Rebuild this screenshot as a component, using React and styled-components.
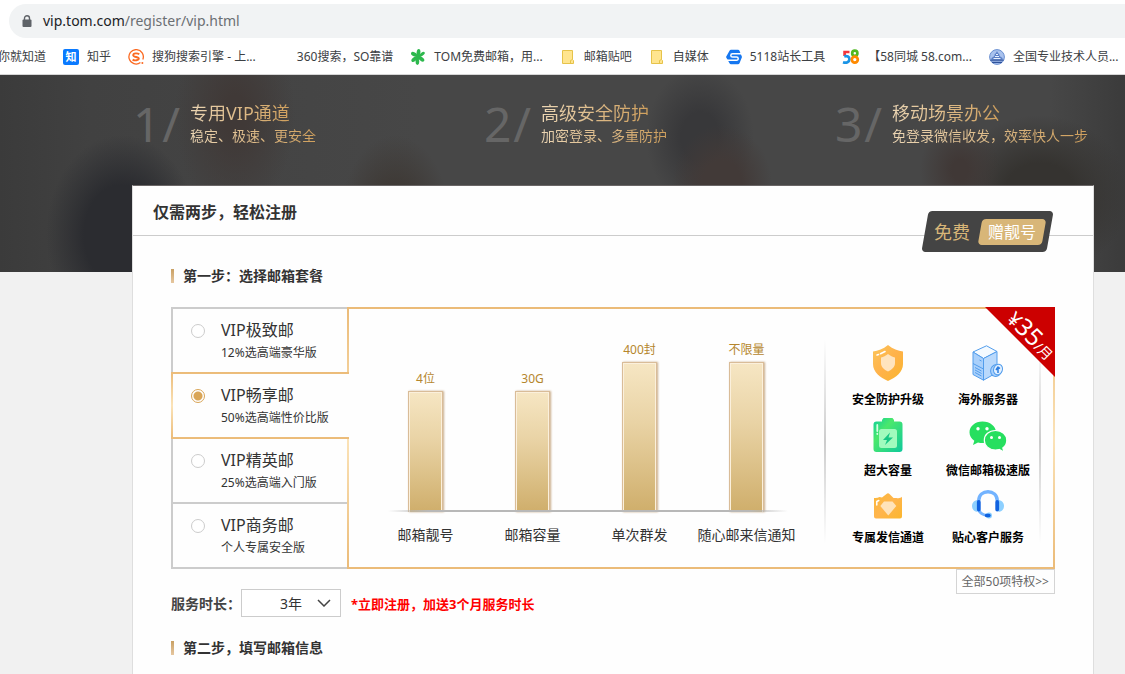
import React, { useState } from 'react';
import styled, { createGlobalStyle, css } from 'styled-components';

const GlobalStyle = createGlobalStyle`
  * {
    box-sizing: border-box;
  }
  html,
  body {
    margin: 0;
    padding: 0;
  }
  body {
    overflow: hidden;
    background: #f1f1f1;
    color: #333;
    font-family: 'Noto Sans', 'Noto Sans CJK SC', sans-serif;
    font-size: 14px;
  }
  h1, h2, h3, p, ul {
    margin: 0;
    padding: 0;
    font-weight: normal;
    list-style: none;
  }
  a {
    color: inherit;
    text-decoration: none;
  }
`;

const gold = '#ebbb78';

const Window = styled.div`
  display: flex;
  flex-direction: column;
  height: 100vh;
`;

const Browser = styled.header`
  flex: none;
  padding-top: 4px;
  background: #fff;
  border-bottom: 1px solid #d6d6d6;
`;

const AddressBar = styled.div`
  display: flex;
  align-items: center;
  gap: 11px;
  height: 34px;
  margin-left: 9px;
  padding-left: 13px;
  border-radius: 17px 0 0 17px;
  background: #f1f3f4;
`;

const Url = styled.div`
  color: #6b6f73;
  font-size: 14px;
  line-height: 20px;
  b {
    color: #202124;
    font-weight: normal;
  }
`;

const Bookmarks = styled.nav`
  display: flex;
  align-items: center;
  gap: 17px;
  height: 36px;
  margin-left: -2px;
  padding-top: 1px;
  overflow: hidden;
`;

const Bookmark = styled.a`
  display: flex;
  flex: none;
  align-items: center;
  gap: 8px;
  color: #3c4043;
  font-size: 12px;
  line-height: 16px;
  white-space: nowrap;
  svg {
    flex: none;
  }
`;

const Hero = styled.section`
  flex: none;
  height: 197px;
  padding: 26px 0 0 133px;
  background:
    radial-gradient(ellipse 76px 100px at 122px 160px, #2b2c30 50%, rgba(43, 44, 48, 0) 100%),
    radial-gradient(ellipse 60px 100px at 235px 40px, #403937 20%, rgba(64, 57, 55, 0) 100%),
    radial-gradient(ellipse 56px 90px at 395px 150px, #3e3935 40%, rgba(62, 57, 53, 0) 100%),
    radial-gradient(ellipse 50px 60px at 722px 110px, #423a38 40%, rgba(66, 58, 56, 0) 100%),
    radial-gradient(ellipse 54px 70px at 700px 62px, #38383a 35%, rgba(56, 56, 58, 0) 100%),
    radial-gradient(ellipse 40px 50px at 960px 95px, #403836 20%, rgba(64, 56, 54, 0) 100%),
    radial-gradient(ellipse 90px 80px at 1040px 120px, #353330 40%, rgba(53, 51, 48, 0) 100%),
    linear-gradient(90deg, #3b3b3b 0, #414141 90px, #474747 420px, #474747 1050px, #3b3b3b 1125px);
`;

const Steps = styled.ul`
  display: grid;
  grid-template-columns: 351px 351px auto;
`;

const Step = styled.li`
  display: flex;
  gap: 10px;
  white-space: nowrap;
`;

const StepNumber = styled.div`
  display: flex;
  justify-content: space-between;
  width: 47px;
  color: #666;
  font-size: 48px;
  line-height: 46px;
`;

const goldText = css`
  width: max-content;
  color: transparent;
  background: linear-gradient(90deg, #ecd6b4, #cf9f5c);
  background-clip: text;
`;

const StepTitle = styled.h2`
  ${goldText}
  font-size: 18px;
  line-height: 24px;
`;

const StepText = styled.p`
  ${goldText}
  font-size: 14px;
  line-height: 22px;
`;

const Card = styled.main`
  position: relative;
  flex: 1 0 auto;
  margin: -87px 31px 0 132px;
  border: 1px solid #dedede;
  border-top-color: #6a6666;
  border-bottom: 0;
  background: #fefefe;
`;

const CardHeader = styled.header`
  position: relative;
  display: flex;
  align-items: center;
  height: 50px;
  padding-left: 20px;
  border-bottom: 1px solid #ccc;
  h1 {
    color: #333;
    font-size: 16px;
    font-weight: bold;
  }
`;

const GiftBadge = styled.div`
  position: absolute;
  right: 43px;
  bottom: -17px;
  display: flex;
  align-items: center;
  gap: 10px;
  width: 125px;
  height: 41px;
  padding-left: 9px;
  color: #d8b678;
  font-size: 18px;
  line-height: 26px;
  &::before {
    content: '';
    position: absolute;
    inset: 0;
    border-radius: 4px;
    background: #444;
    transform: skewX(-10deg);
  }
  span {
    position: relative;
  }
`;

const GiftTag = styled.strong`
  position: relative;
  width: 64px;
  color: #fff;
  font-size: 16px;
  font-weight: normal;
  text-align: center;
  &::before {
    content: '';
    position: absolute;
    inset: 0;
    border-radius: 4px;
    background: #d8b678;
    transform: skewX(-10deg);
  }
`;

const CardBody = styled.div`
  padding: 30px 38px 0;
`;

const SectionTitle = styled.h2`
  display: flex;
  align-items: center;
  gap: 9px;
  color: #333;
  font-size: 14px;
  font-weight: bold;
  line-height: 20px;
  &::before {
    content: '';
    width: 3px;
    height: 14px;
    background: linear-gradient(#c9a063, #e6c7a0);
  }
`;

const PlanBox = styled.div`
  display: flex;
  margin-top: 21px;
`;

const PlanList = styled.div`
  flex: none;
  width: 176px;
  padding-top: 2px;
`;

const Plan = styled.label`
  position: relative;
  display: flex;
  gap: 16px;
  width: 176px;
  height: 67px;
  margin-top: -2px;
  padding: 9px 0 0 18px;
  border: 2px solid #ccc;
  border-right: 0;
  background: #fefefe;
  cursor: pointer;
  ${({ $active }) =>
    $active &&
    css`
      z-index: 1;
      width: 178px;
      border-image: linear-gradient(${gold}, #fbe3b8, ${gold}) 2;
    `}
`;

const PlanRadio = styled.input`
  appearance: none;
  flex: none;
  width: 14px;
  height: 14px;
  margin: 6px 0 0;
  border: 1px solid #ccc;
  border-radius: 50%;
  background: #fff;
  &:checked {
    border-color: #d9a557;
    background: radial-gradient(circle, #d9a557 4px, #fff 5px);
  }
`;

const PlanName = styled.span`
  display: block;
  font-size: 16px;
  line-height: 24px;
`;

const PlanNote = styled.span`
  display: block;
  font-size: 12px;
  line-height: 22px;
  white-space: nowrap;
`;

const Panel = styled.div`
  position: relative;
  display: flex;
  flex: 1;
  padding-right: 12px;
  border: 2px solid ${gold};
  border-image: linear-gradient(${gold}, #fbe3b8, ${gold}) 2;
`;

const Chart = styled.div`
  display: grid;
  flex: 1;
  grid-template-columns: repeat(4, 1fr);
  align-content: end;
  padding: 0 24px 22px 23px;
`;

const ChartColumn = styled.div`
  display: flex;
  flex-direction: column;
  align-items: center;
  justify-content: flex-end;
`;

const ChartValue = styled.span`
  margin-bottom: 2px;
  color: #b5862d;
  font-size: 12px;
  line-height: 20px;
`;

const Bar = styled.div`
  width: 35px;
  border: 1px solid #d9bc98;
  border-bottom: 0;
  background: linear-gradient(#f6e6c3, #e9d3a5 40%, #cfae6b);
  box-shadow: inset 1px 1px 0 #fbf0dc, inset -1px 0 0 #fbf0dc, 1px 0 2px #c9ad8c;
`;

const Baseline = styled.div`
  grid-column: 1 / -1;
  height: 2px;
  margin: -2px 12px 0 16px;
  background: linear-gradient(90deg, rgba(176, 176, 176, 0), #b8b8b8 10%, #b8b8b8 90%, rgba(176, 176, 176, 0));
`;

const ChartLabel = styled.span`
  margin-top: 13px;
  font-size: 14px;
  line-height: 20px;
  text-align: center;
  white-space: nowrap;
`;

const Perks = styled.ul`
  display: grid;
  flex: none;
  grid-template-columns: 100px 100px;
  align-content: start;
  row-gap: 6px;
  width: 217px;
  padding: 36px 0 0 14px;
  background:
    linear-gradient(rgba(208, 208, 208, 0), #ccc 50%, rgba(208, 208, 208, 0)) 0 30px / 2px 205px no-repeat,
    linear-gradient(rgba(208, 208, 208, 0), #ccc 50%, rgba(208, 208, 208, 0)) 100% 30px / 2px 205px no-repeat;
`;

const Perk = styled.li`
  display: flex;
  flex-direction: column;
  align-items: center;
  gap: 9px;
  color: #000;
  font-size: 12px;
  font-weight: bold;
  line-height: 20px;
  white-space: nowrap;
`;

const Ribbon = styled.div`
  position: absolute;
  top: -2px;
  right: -2px;
  width: 70px;
  height: 70px;
  background: #c00;
  clip-path: polygon(0 0, 100% 0, 100% 100%);
`;

const Price = styled.div`
  position: absolute;
  top: 13px;
  left: 6px;
  width: 80px;
  color: #fff;
  font-size: 24px;
  line-height: 28px;
  text-align: center;
  transform: rotate(45deg);
`;

const Currency = styled.small`
  font-size: 20px;
`;

const Period = styled.small`
  font-size: 14px;
`;

const UnderBox = styled.div`
  display: flex;
  align-items: flex-start;
  justify-content: space-between;
`;

const AllPerks = styled.a`
  padding: 0 5px;
  border: 1px solid #d4d4d4;
  color: #666;
  font-size: 12px;
  line-height: 23px;
`;

const Duration = styled.div`
  display: flex;
  align-items: center;
  padding-top: 20px;
  label {
    width: 70px;
    color: #444;
    font-weight: bold;
    white-space: nowrap;
  }
`;

const SelectBox = styled.div`
  position: relative;
  margin-right: 10px;
  svg {
    position: absolute;
    top: 10px;
    right: 10px;
    pointer-events: none;
  }
`;

const Select = styled.select`
  appearance: none;
  display: block;
  width: 100px;
  height: 28px;
  padding: 0 0 0 38px;
  border: 1px solid #ccc;
  border-radius: 0;
  background: #fff;
  color: #333;
  font-family: inherit;
  font-size: 14px;
`;

const Promo = styled.strong`
  color: #f00;
  font-size: 13px;
`;

const Form = styled.section`
  padding-top: 21px;
`;

const LockIcon = () => (
  <svg width="10" height="13" viewBox="0 0 10 13">
    <path d="M2.500 5V3.200a2.500 2.500 0 0 1 5 0V5" fill="none" stroke="#5f6368" strokeWidth="1.400" />
    <rect x="0.500" y="4.500" width="9" height="7.500" rx="1" fill="#5f6368" />
  </svg>
);

const ZhihuIcon = () => (
  <svg width="16" height="16" viewBox="0 0 16 16">
    <rect width="16" height="16" rx="2" fill="#0a7aff" />
    <text x="8" y="12" fontSize="11" fontWeight="bold" fill="#fff" textAnchor="middle">知</text>
  </svg>
);

const SogouIcon = () => (
  <svg width="16" height="16" viewBox="0 0 16 16" fill="none" stroke="#fb6a22">
    <path d="M12.400 13.600A7.200 7.200 0 1 1 14.800 10.500" strokeWidth="1.300" />
    <path d="M11.300 5.200C9.500 4 5.200 4 5.200 6.200S10.800 7.600 10.800 9.600 6.500 11.800 4.600 10.600" strokeWidth="1.900" />
    <circle cx="14.400" cy="14" r="1" fill="#fb6a22" stroke="none" />
  </svg>
);

const BlankIcon = () => <svg width="16" height="16" />;

const TomIcon = () => (
  <svg width="16" height="16" viewBox="0 0 16 16" fill="#2db84d">
    <ellipse cx="8.500" cy="3.500" rx="1.900" ry="3.500" transform="rotate(8 8.500 3.500)" />
    <ellipse cx="4" cy="5.200" rx="3.200" ry="1.900" transform="rotate(28 4 5.200)" />
    <ellipse cx="12" cy="5.200" rx="3.200" ry="1.600" transform="rotate(-35 12 5.200)" />
    <ellipse cx="4.300" cy="10.200" rx="3.400" ry="1.900" transform="rotate(-40 4.300 10.200)" />
    <ellipse cx="11.400" cy="10" rx="3.400" ry="1.900" transform="rotate(38 11.400 10)" />
    <ellipse cx="7.400" cy="12.600" rx="1.800" ry="3.300" />
    <circle cx="8" cy="7.800" r="2.600" />
  </svg>
);

const FolderIcon = () => (
  <svg width="16" height="16" viewBox="0 0 16 16">
    <path d="M2.500 1.500h10v9l1 1v3h-11z" fill="#ffe58f" stroke="#e6c34a" />
    <path d="M10.500 14.500v-3l2-1" fill="none" stroke="#e6c34a" />
  </svg>
);

const Icon5118 = () => (
  <svg width="16" height="16" viewBox="0 0 16 16">
    <path d="M5 .8h7Q13 .8 13.500 1.800L16 8l-2.500 6.200q-.5 1-1.500 1H5q-1 0-1.500-1L0 8l3.500-6.200Q4 .8 5 .8z" fill="#1677f0" />
    <path d="M15.500 4.800H6.600Q4.800 4.800 4.800 6.400T6.600 8h4q1.600 0 1.600 1.600T10.600 11.200H.8" fill="none" stroke="#fff" strokeWidth="1.500" />
  </svg>
);

const Icon58 = () => (
  <svg width="18" height="16" viewBox="0 0 18 16" fill="none" strokeWidth="2.700">
    <path d="M7.500 3H2.600v4" stroke="#f5353b" />
    <path d="M2.200 7.400c3-1 5.200.2 5.200 2.800 0 2.800-3 4.200-6.400 3" stroke="#1a94e6" />
    <circle cx="12.800" cy="4.200" r="2.600" stroke="#4fb821" />
    <circle cx="12.800" cy="10.600" r="3" stroke="#ff8a00" />
  </svg>
);

const GlobeIcon = () => (
  <svg width="16" height="16" viewBox="0 0 16 16">
    <circle cx="8" cy="8" r="7.400" fill="#a9c2ee" stroke="#6a8fd0" />
    <path d="M8 2l1 2 1.500 1.500v1.500l3 2v1.500H2.500V9l3-2V5.500L7 4z" fill="#5b7fc6" />
    <path d="M1.500 11.200h13M3 13.300h10" stroke="#2f529b" strokeWidth="1.300" />
    <path d="M7 5.500h2M6 7.500h4M4.500 9.500h7" stroke="#e8f0ff" />
  </svg>
);

const ShieldIcon = () => (
  <svg width="36" height="36" viewBox="0 0 36 36">
    <defs>
      <linearGradient id="shield" x2="1" y2="1">
        <stop stopColor="#fbc55a" />
        <stop offset=".5" stopColor="#ffb24a" />
        <stop offset="1" stopColor="#f9b52c" />
      </linearGradient>
    </defs>
    <path d="M18 0c5 4 10 6 15 6.500V19c0 8-7 13.500-15 17C10 32.500 3 27 3 19V6.500C8 6 13 4 18 0z" fill="url(#shield)" />
    <path d="M18 9c2.500 2 4.500 3 7 3.500V18c0 4-3 6.500-7 8.500-4-2-7-4.500-7-8.500v-5.500c2.500-.5 4.500-1.500 7-3.500z" fill="#ffe4be" />
    <path d="M7 10l1.500-.5M10.500 8.700L15 6.500" stroke="#fff" strokeWidth="1.600" strokeLinecap="round" />
  </svg>
);

const ServerIcon = () => (
  <svg width="36" height="36" viewBox="0 0 36 36" stroke="#529dec" strokeWidth="1" strokeLinejoin="round">
    <path d="M16.500 .8L27 6.500 13.500 13.500 3 7z" fill="#f4faff" />
    <path d="M3 7l10.500 6.500v21.700L3 29.500z" fill="#a9d0fb" />
    <path d="M13.500 13.500L27 6.500V27.500L13.500 35.200z" fill="#b9d9fc" />
    <path d="M3 18.500L13.500 24M5 22.500l6.500 3.500M5 25l6.500 3.500M5 27.500l6.500 3.500M9.500 15l2 1" fill="none" />
    <ellipse cx="26" cy="25.500" rx="5.300" ry="6" transform="rotate(20 26 25.500)" fill="#a9d0fb" />
    <ellipse cx="28" cy="24.500" rx="4.400" ry="5.400" transform="rotate(20 28 24.500)" fill="#e2f0ff" />
    <path d="M28 28v-6M26 25l2-3 2 1.500" fill="none" stroke="#2c7de0" strokeWidth="1.500" />
  </svg>
);

const BatteryIcon = () => (
  <svg width="36" height="36" viewBox="0 0 36 36">
    <defs>
      <linearGradient id="battery" x2="1" y2="1">
        <stop stopColor="#0dcf9c" />
        <stop offset=".35" stopColor="#4be86c" />
        <stop offset="1" stopColor="#0fc99c" />
      </linearGradient>
    </defs>
    <path d="M12 4l1.500-2h9L24 4v1.500h5.500a3 3 0 0 1 3 3V33a3 3 0 0 1-3 3h-23a3 3 0 0 1-3-3V8.500a3 3 0 0 1 3-3H12z" fill="url(#battery)" />
    <rect x="9" y="13" width="18" height="19" rx="2.500" fill="#a1fbbd" />
    <path d="M20 16.500l-7 7.500h4l-2 5 8-7.500h-4.500z" fill="#16c784" />
    <path d="M7.300 9v6M7.300 17.700v.3" stroke="#d6ffe4" strokeWidth="1.800" strokeLinecap="round" />
  </svg>
);

const WechatIcon = () => (
  <svg width="38" height="36" viewBox="0 0 38 36">
    <path d="M13.500 5.500C6 5.500.500 10.300.500 16.300c0 3.500 1.800 6.500 4.800 8.500L4 29l5-2.500c1.500.4 3 .6 4.500.6 7.500 0 13.500-4.800 13.500-10.800S21 5.500 13.500 5.500z" fill="#26df5f" />
    <path d="M26.500 14.500c-6.500 0-11.200 4.300-11.200 9.700s4.700 9.800 11.200 9.800c1.300 0 2.500-.2 3.700-.5L35 36l-1.200-4c2.500-1.800 4-4.500 4-7.800 0-5.400-4.800-9.700-11.300-9.700z" fill="#26df5f" stroke="#fff" strokeWidth="1.200" />
    <g fill="#fff">
      <circle cx="9" cy="12.800" r="1.700" />
      <circle cx="18" cy="12.800" r="1.700" />
      <circle cx="22.500" cy="21.500" r="1.500" />
      <circle cx="30.500" cy="21.500" r="1.500" />
    </g>
  </svg>
);

const DiamondIcon = () => (
  <svg width="36" height="32" viewBox="0 0 36 32">
    <defs>
      <linearGradient id="crown" x2="1" y2="1">
        <stop stopColor="#fbb83a" />
        <stop offset=".5" stopColor="#ffb54d" />
        <stop offset="1" stopColor="#fbb62c" />
      </linearGradient>
    </defs>
    <path d="M4 11c2 .3 4 0 5.500-1L12 10.500 16.500 7a2 2 0 0 1 3 0L23.500 11h3c2 .5 4 .3 5.500-1.200V29.500a2 2 0 0 1-2 2H6a2 2 0 0 1-2-2z" fill="url(#crown)" />
    <path d="M14 14.500h8.500l3.800 4.500-8 9.500-8-9.500z" fill="#ffe3ba" />
    <path d="M6.800 18v-3.500l2-1" stroke="#fff" strokeWidth="1.500" fill="none" strokeLinecap="round" />
  </svg>
);

const HeadsetIcon = () => (
  <svg width="36" height="32" viewBox="0 0 36 32" fill="none" strokeLinecap="round">
    <path d="M7.500 13C4 13.500 2 16 2 19s2 5.500 5.500 6z" fill="#8dd0ff" />
    <path d="M28.500 13c3.500.5 5.500 3 5.500 6s-2 5.500-5.500 6z" fill="#8dd0ff" />
    <path d="M8.700 13.500C9 8 13 4.800 18 4.800S27 8 27.300 13.500" stroke="#72b3ff" strokeWidth="3.400" />
    <path d="M8.700 23c1.500 3.500 4.500 5 8 5.300" stroke="#72b3ff" strokeWidth="3" />
    <path d="M8.800 15v7.500M27.200 15v7.500" stroke="#1062e0" strokeWidth="3.800" />
    <circle cx="19" cy="28.500" r="3" fill="#8dd0ff" />
    <path d="M16.500 28.500h2.500" stroke="#1062e0" strokeWidth="3.400" />
  </svg>
);

const ChevronIcon = () => (
  <svg width="14" height="8" viewBox="0 0 14 8" fill="none" stroke="#444" strokeWidth="1.500">
    <path d="M1 1l6 6 6-6" />
  </svg>
);

const bookmarks = [
  { name: '知乎', Icon: ZhihuIcon },
  { name: '搜狗搜索引擎 - 上...', Icon: SogouIcon },
  { name: '360搜索，SO靠谱', Icon: BlankIcon },
  { name: 'TOM免费邮箱，用...', Icon: TomIcon },
  { name: '邮箱贴吧', Icon: FolderIcon },
  { name: '自媒体', Icon: FolderIcon },
  { name: '5118站长工具', Icon: Icon5118 },
  { name: '【58同城 58.com...', Icon: Icon58 },
  { name: '全国专业技术人员...', Icon: GlobeIcon },
];

const steps = [
  { title: '专用VIP通道', text: '稳定、极速、更安全' },
  { title: '高级安全防护', text: '加密登录、多重防护' },
  { title: '移动场景办公', text: '免登录微信收发，效率快人一步' },
];

const plans = [
  { name: 'VIP极致邮', note: '12%选高端豪华版' },
  { name: 'VIP畅享邮', note: '50%选高端性价比版' },
  { name: 'VIP精英邮', note: '25%选高端入门版' },
  { name: 'VIP商务邮', note: '个人专属安全版' },
];

const features = [
  { label: '邮箱靓号', value: '4位', height: 121 },
  { label: '邮箱容量', value: '30G', height: 121 },
  { label: '单次群发', value: '400封', height: 150 },
  { label: '随心邮来信通知', value: '不限量', height: 150 },
];

const perks = [
  { name: '安全防护升级', Icon: ShieldIcon },
  { name: '海外服务器', Icon: ServerIcon },
  { name: '超大容量', Icon: BatteryIcon },
  { name: '微信邮箱极速版', Icon: WechatIcon },
  { name: '专属发信通道', Icon: DiamondIcon },
  { name: '贴心客户服务', Icon: HeadsetIcon },
];

const App = () => {
  const [plan, setPlan] = useState(1);

  return (
    <Window>
      <GlobalStyle />
      <Browser>
        <AddressBar>
          <LockIcon />
          <Url>
            <b>vip.tom.com</b>/register/vip.html
          </Url>
        </AddressBar>
        <Bookmarks>
          <Bookmark href="#">你就知道</Bookmark>
          {bookmarks.map(({ name, Icon }) => (
            <Bookmark href="#" key={name}>
              <Icon />
              {name}
            </Bookmark>
          ))}
        </Bookmarks>
      </Browser>

      <Hero>
        <Steps>
          {steps.map(({ title, text }, index) => (
            <Step key={title}>
              <StepNumber>
                <span>{index + 1}</span>
                <span>/</span>
              </StepNumber>
              <div>
                <StepTitle>{title}</StepTitle>
                <StepText>{text}</StepText>
              </div>
            </Step>
          ))}
        </Steps>
      </Hero>

      <Card>
        <CardHeader>
          <h1>仅需两步，轻松注册</h1>
          <GiftBadge>
            <span>免费</span>
            <GiftTag>
              <span>赠靓号</span>
            </GiftTag>
          </GiftBadge>
        </CardHeader>
        <CardBody>
          <SectionTitle>第一步：选择邮箱套餐</SectionTitle>
          <PlanBox>
            <PlanList>
              {plans.map(({ name, note }, index) => (
                <Plan key={name} $active={index === plan}>
                  <PlanRadio
                    type="radio"
                    name="plan"
                    checked={index === plan}
                    onChange={() => setPlan(index)}
                  />
                  <span>
                    <PlanName>{name}</PlanName>
                    <PlanNote>{note}</PlanNote>
                  </span>
                </Plan>
              ))}
            </PlanList>
            <Panel>
              <Chart>
                {features.map(({ label, value, height }) => (
                  <ChartColumn key={label}>
                    <ChartValue>{value}</ChartValue>
                    <Bar style={{ height }} />
                  </ChartColumn>
                ))}
                <Baseline />
                {features.map(({ label }) => (
                  <ChartLabel key={label}>{label}</ChartLabel>
                ))}
              </Chart>
              <Perks>
                {perks.map(({ name, Icon }) => (
                  <Perk key={name}>
                    <Icon />
                    {name}
                  </Perk>
                ))}
              </Perks>
              <Ribbon>
                <Price>
                  <Currency>¥</Currency>35<Period>/月</Period>
                </Price>
              </Ribbon>
            </Panel>
          </PlanBox>
          <UnderBox>
            <Duration>
              <label htmlFor="duration">服务时长：</label>
              <SelectBox>
                <Select id="duration" defaultValue="3">
                  <option value="1">1年</option>
                  <option value="2">2年</option>
                  <option value="3">3年</option>
                </Select>
                <ChevronIcon />
              </SelectBox>
              <Promo>*立即注册，加送3个月服务时长</Promo>
            </Duration>
            <AllPerks href="#">全部50项特权&gt;&gt;</AllPerks>
          </UnderBox>
          <Form>
            <SectionTitle>第二步，填写邮箱信息</SectionTitle>
          </Form>
        </CardBody>
      </Card>
    </Window>
  );
};

export default App;
